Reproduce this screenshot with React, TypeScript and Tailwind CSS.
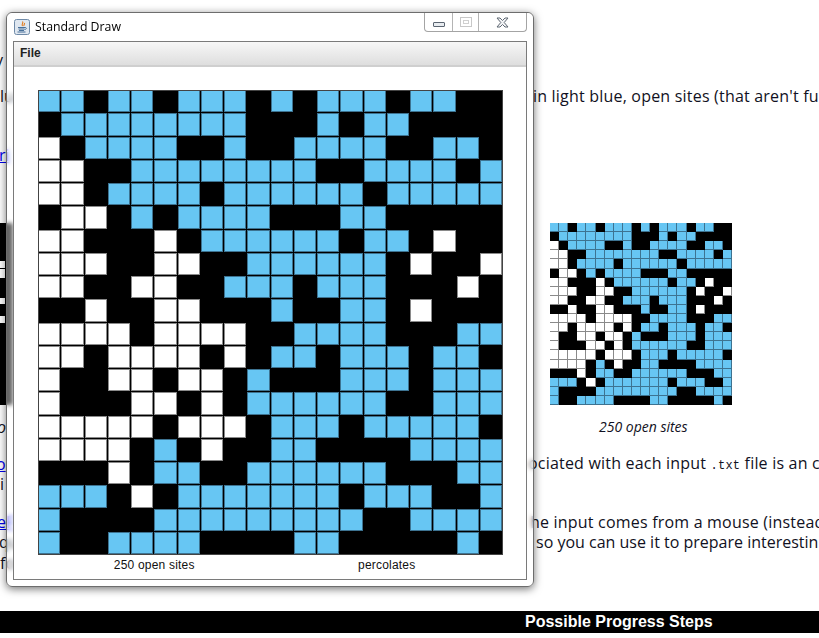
import React from 'react'

// 0 = blocked, 1 = full (light blue), 2 = open (white)
const sites = [
    '11011011101011101100',
    '01111111100010110000',
    '20111100100111100110',
    '22001111111100111101',
    '22011110111111011111',
    '02201011110001100000',
    '22000201111110110200',
    '22200220011111102002',
    '22002200111011100020',
    '00200220001001102000',
    '22220222200111100011',
    '22022220201101110110',
    '20022022010001110111',
    '20002202011111100111',
    '22222022201110111110',
    '22220102001100001111',
    '00020110011111100011',
    '11102011111110111001',
    '10000111111111001111',
    '10011110000110000010',
]

const cellColors: Record<string, string> = {
    '0': 'bg-black',
    '1': 'bg-[#67c6f3] border-[#3d7391]',
    '2': 'bg-white border-[#8a8a8a]',
}

function BigGrid() {
    return (
        <div className="grid h-[465px] w-[465px] grid-cols-[repeat(20,1fr)] grid-rows-[repeat(20,1fr)] bg-black outline outline-1 -outline-offset-1 outline-[#444444]">
            {sites.join('').split('').map((s, i) => (
                <div key={i} className="mb-[1px] mr-[1px] bg-black">
                    {s !== '0' && <div className={`h-full w-full border ${cellColors[s]}`} />}
                </div>
            ))}
        </div>
    )
}

function SmallGrid() {
    return (
        <div className="grid h-[182px] w-[182px] grid-cols-[repeat(20,1fr)] grid-rows-[repeat(20,1fr)] bg-black">
            {sites.join('').split('').map((s, i) => (
                <div key={i} className={`border-b border-r ${s === '0' ? 'border-black bg-black' : cellColors[s]}`} />
            ))}
        </div>
    )
}

function Line({ left, right, leftClass = '', rightClass = '', className = '' }: {
    left?: string
    right?: React.ReactNode
    leftClass?: string
    rightClass?: string
    className?: string
}) {
    return (
        <div className={`flex h-5 items-center whitespace-nowrap text-[16px] leading-5 text-[#111122] ${className}`}>
            <div className={`w-[525px] shrink-0 ${leftClass}`}>{left}</div>
            <div className={rightClass}>{right}</div>
        </div>
    )
}

function JavaIcon() {
    return (
        <svg width="16" height="16" viewBox="0 0 16 16">
            <rect x="0.5" y="0.5" width="15" height="15" rx="2" fill="#dfe7f0" stroke="#6f8aa8" />
            <path d="M8.5 2.5c1.5 1.5-1.5 2.5 0 4.5M10.5 4c.5 1-1 1.5-.5 3" fill="none" stroke="#e2791b" strokeWidth="1.1" />
            <path d="M4 8.5h7M4.5 10h6M5 11.5h5M3.5 13h8" fill="none" stroke="#35618f" strokeWidth="0.9" />
            <path d="M11 8.5c2 0 2 2-.5 2" fill="none" stroke="#35618f" strokeWidth="0.8" />
        </svg>
    )
}

function WindowButtons() {
    return (
        <div className="flex h-[19px] rounded-b-[4px] border-x border-b border-[#a4a4a4] bg-white">
            <div className="flex w-[28px] items-center justify-center border-r border-[#b4b4b4]">
                <div className="mt-[4px] h-[5px] w-[12px] rounded-[1px] border border-[#5a6470] bg-[#e8ecf0]" />
            </div>
            <div className="flex w-[26px] items-center justify-center border-r border-[#b4b4b4]">
                <div className="flex h-[10px] w-[12px] items-center justify-center border border-[#c8c8c8]">
                    <div className="h-[4px] w-[6px] border border-[#d0d0d0]" />
                </div>
            </div>
            <div className="flex w-[47px] items-center justify-center">
                <svg width="13" height="11" viewBox="0 0 13 11">
                    <path d="M1 1h3l2.5 2.5L9 1h3L8.2 5.5 12 10H9L6.5 7.5 4 10H1l3.8-4.5z" fill="#f4f5f7" stroke="#5f6873" strokeWidth="1" />
                </svg>
            </div>
        </div>
    )
}

export default function App() {
    return (
        <div className="relative h-[638px] w-[819px] overflow-hidden bg-white font-['Open_Sans',sans-serif]">
            {/* page behind the window */}
            <div className="flex flex-col pt-[50px]">
                <Line left="y" leftClass="-ml-[5px]" />
                <Line
                    className="mt-[16px]"
                    left="lu"
                    right="in light blue, open sites (that aren't fu"
                    rightClass="pl-[8px] tracking-[0.2px]"
                />
                <Line className="mt-[39px]" left="ri" leftClass="text-[#0000ee] underline -ml-[1px]" />
                <div className="mt-[58px] flex h-[182px]">
                    <div className="flex w-[550px] shrink-0">
                        <div className="flex h-full w-[13px] flex-col bg-black">
                            <div className="mt-[38px] h-[7px] w-[5px] bg-white" />
                            <div className="mt-[1px] h-[9px] w-[5px] bg-white" />
                            <div className="mt-[20px] h-[6px] w-[5px] bg-white" />
                            <div className="mt-[12px] h-[7px] w-[5px] bg-white" />
                        </div>
                    </div>
                    <SmallGrid />
                </div>
                <Line
                    className="mt-[12px]"
                    left="o"
                    leftClass="italic -ml-[3px]"
                    right="250 open sites"
                    rightClass="pl-[77px] text-[14px] italic"
                />
                <Line
                    className="mt-[17px]"
                    left="o"
                    leftClass="text-[#0000ee] underline -ml-[4px]"
                    right={<>ociated with each input <span className="font-['Liberation_Mono',monospace] text-[12px]">.txt</span> file is an c</>}
                    rightClass="pl-[7px] tracking-[0.2px]"
                />
                <Line left="i" />
                <Line
                    className="mt-[18px]"
                    left="eF"
                    leftClass="text-[#0000ee] underline -ml-[3px]"
                    right="he input comes from a mouse (instead"
                    rightClass="pl-[8px] tracking-[0.2px]"
                />
                <Line left="qu" leftClass="-ml-[1px]" right="so you can use it to prepare interestin" rightClass="pl-[12px]" />
                <Line className="mt-[1px]" left="fo" />
                <div className="mt-[38px] h-[22px] bg-black pl-[525px] font-['Liberation_Sans',sans-serif] text-[16px] font-bold leading-[22px] text-white">
                    Possible Progress Steps
                </div>
            </div>

            {/* Standard Draw window */}
            <div className="absolute left-[6px] top-[12px] flex h-[575px] w-[528px] flex-col rounded-[6px] border border-[#6d6d6d] bg-white/40 shadow-[0_2px_8px_rgba(0,0,0,0.55)] backdrop-blur-[2px]">
                <div className="flex h-[28px] shrink-0 items-start justify-between rounded-t-[6px] bg-white pl-[7px] pr-[6px]">
                    <div className="mt-[6px] flex items-center gap-[5px]">
                        <JavaIcon />
                        <span className="text-[12.3px] leading-4 text-black">Standard Draw</span>
                    </div>
                    <WindowButtons />
                </div>
                <div className="mx-[6px] flex h-[539px] flex-col border border-[#7a7a7a] bg-white">
                    <div className="flex h-[25px] shrink-0 items-center border-b-2 border-[#cfcfcf] bg-gradient-to-b from-[#f7f7f7] to-[#dedede] pb-[1px] pl-[6px] font-['Liberation_Sans',sans-serif] text-[12px] font-bold text-[#222222]">
                        File
                    </div>
                    <div className="flex flex-col items-start pl-[24px] pt-[23px]">
                        <BigGrid />
                        <div className="grid w-[465px] grid-cols-2 pt-[3px] text-center font-['Liberation_Sans',sans-serif] text-[12px] leading-[14px] tracking-[0.2px] text-[#111111]">
                            <span>250 open sites</span>
                            <span>percolates</span>
                        </div>
                    </div>
                </div>
            </div>
        </div>
    )
}
